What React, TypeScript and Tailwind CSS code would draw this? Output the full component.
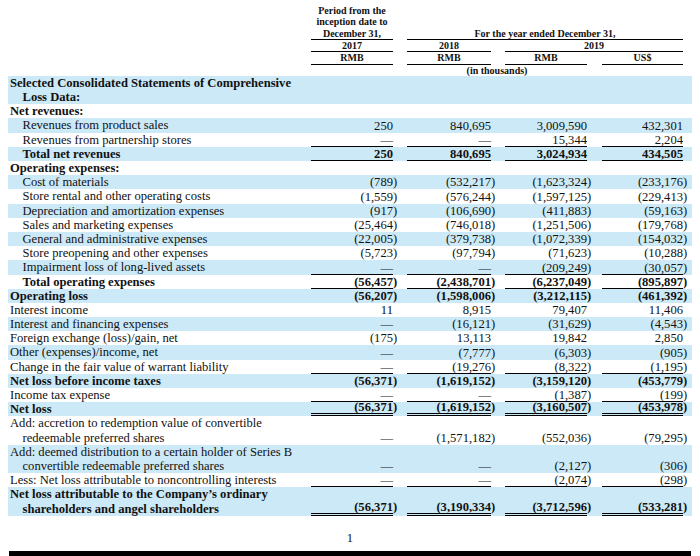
import React from "react";

type Line = "none" | "single" | "double";
type Row = {
  label: string[];
  bold?: boolean;
  indent?: boolean;
  v?: string[];
  line?: Line;
};

const rows: Row[] = [
  { label: ["Selected Consolidated Statements of Comprehensive", "Loss Data:"], bold: true },
  { label: ["Net revenues:"], bold: true },
  { label: ["Revenues from product sales"], indent: true, v: ["250", "840,695", "3,009,590", "432,301"] },
  { label: ["Revenues from partnership stores"], indent: true, v: ["—", "—", "15,344", "2,204"], line: "single" },
  { label: ["Total net revenues"], indent: true, bold: true, v: ["250", "840,695", "3,024,934", "434,505"], line: "single" },
  { label: ["Operating expenses:"], bold: true },
  { label: ["Cost of materials"], indent: true, v: ["(789)", "(532,217)", "(1,623,324)", "(233,176)"] },
  { label: ["Store rental and other operating costs"], indent: true, v: ["(1,559)", "(576,244)", "(1,597,125)", "(229,413)"] },
  { label: ["Depreciation and amortization expenses"], indent: true, v: ["(917)", "(106,690)", "(411,883)", "(59,163)"] },
  { label: ["Sales and marketing expenses"], indent: true, v: ["(25,464)", "(746,018)", "(1,251,506)", "(179,768)"] },
  { label: ["General and administrative expenses"], indent: true, v: ["(22,005)", "(379,738)", "(1,072,339)", "(154,032)"] },
  { label: ["Store preopening and other expenses"], indent: true, v: ["(5,723)", "(97,794)", "(71,623)", "(10,288)"] },
  { label: ["Impairment loss of long-lived assets"], indent: true, v: ["—", "—", "(209,249)", "(30,057)"], line: "single" },
  { label: ["Total operating expenses"], indent: true, bold: true, v: ["(56,457)", "(2,438,701)", "(6,237,049)", "(895,897)"], line: "single" },
  { label: ["Operating loss"], bold: true, v: ["(56,207)", "(1,598,006)", "(3,212,115)", "(461,392)"] },
  { label: ["Interest income"], v: ["11", "8,915", "79,407", "11,406"] },
  { label: ["Interest and financing expenses"], v: ["—", "(16,121)", "(31,629)", "(4,543)"] },
  { label: ["Foreign exchange (loss)/gain, net"], v: ["(175)", "13,113", "19,842", "2,850"] },
  { label: ["Other (expenses)/income, net"], v: ["—", "(7,777)", "(6,303)", "(905)"] },
  { label: ["Change in the fair value of warrant liability"], v: ["—", "(19,276)", "(8,322)", "(1,195)"], line: "single" },
  { label: ["Net loss before income taxes"], bold: true, v: ["(56,371)", "(1,619,152)", "(3,159,120)", "(453,779)"] },
  { label: ["Income tax expense"], v: ["—", "—", "(1,387)", "(199)"], line: "single" },
  { label: ["Net loss"], bold: true, v: ["(56,371)", "(1,619,152)", "(3,160,507)", "(453,978)"], line: "double" },
  { label: ["Add: accretion to redemption value of convertible", "redeemable preferred shares"], v: ["—", "(1,571,182)", "(552,036)", "(79,295)"] },
  { label: ["Add: deemed distribution to a certain holder of Series B", "convertible redeemable preferred shares"], v: ["—", "—", "(2,127)", "(306)"] },
  { label: ["Less: Net loss attributable to noncontrolling interests"], v: ["—", "—", "(2,074)", "(298)"], line: "single" },
  { label: ["Net loss attributable to the Company’s ordinary", "shareholders and angel shareholders"], bold: true, v: ["(56,371)", "(3,190,334)", "(3,712,596)", "(533,281)"], line: "double" },
];

const colW = ["w-[82px]", "w-[84px] ml-[14px]", "w-[82px] ml-[14px]", "w-[81px] ml-[15px]"];

function Num({ value }: { value: string }) {
  if (value.startsWith("(") && value.endsWith(")")) {
    return (
      <span className="block whitespace-nowrap leading-[11px]">
        {value.slice(0, -1)}
        <span className="inline-block w-0">)</span>
      </span>
    );
  }
  return <span className="block whitespace-nowrap leading-[11px]">{value}</span>;
}

export default function App() {
  return (
    <div className="w-[700px] h-[556px] overflow-hidden bg-white text-[#111] font-['Liberation_Serif','Times_New_Roman',serif]">
      <div className="ml-[8px] w-[684px]">
        {/* Header */}
        <div className="text-[10px] font-bold leading-[11.3px] pt-[5px]">
          <div className="flex">
            <div className="w-[303px] shrink-0" />
            <div className="w-[82px] border-b border-black text-center">
              <div>Period from the</div>
              <div>inception date to</div>
              <div>December 31,</div>
            </div>
            <div className="w-[276px] ml-[14px] border-b border-black flex items-end justify-center">
              For the year ended December 31,
            </div>
          </div>
          <div className="flex h-[12.4px]">
            <div className="w-[303px] shrink-0" />
            <div className="w-[82px] border-b border-black text-center">2017</div>
            <div className="w-[84px] ml-[14px] border-b border-black text-center">2018</div>
            <div className="w-[178px] ml-[14px] border-b border-black text-center">2019</div>
          </div>
          <div className="flex h-[12.4px]">
            <div className="w-[303px] shrink-0" />
            <div className="w-[82px] border-b border-black text-center">RMB</div>
            <div className="w-[84px] ml-[14px] border-b border-black text-center">RMB</div>
            <div className="w-[82px] ml-[14px] border-b border-black text-center">RMB</div>
            <div className="w-[81px] ml-[15px] border-b border-black text-center">US$</div>
          </div>
          <div className="flex h-[11.2px]">
            <div className="w-[303px] shrink-0" />
            <div className="w-[372px] text-center">(in thousands)</div>
          </div>
        </div>

        {/* Body */}
        <div className="text-[12.6px] leading-[14.2px]">
          {rows.map((r, i) => {
            const blue = i % 2 === 0;
            const h = r.label.length === 2 ? "h-[28.4px]" : "h-[14.2px]";
            const lineCls =
              r.line === "single"
                ? "border-b border-black"
                : r.line === "double"
                ? "border-b-[3px] border-double border-black"
                : "pb-[1px]";
            return (
              <div key={i} className={`flex ${h} ${blue ? "bg-[#cce9f7]" : ""} ${r.bold ? "font-bold" : ""}`}>
                <div className="w-[303px] shrink-0 whitespace-nowrap">
                  {r.label.map((l, j) => (
                    <div key={j} className={r.indent || j > 0 ? "pl-[14.5px]" : "pl-[2px]"}>
                      {l}
                    </div>
                  ))}
                </div>
                {r.v &&
                  r.v.map((val, k) => (
                    <div key={k} className={`${colW[k]} shrink-0 h-full flex items-end justify-end ${lineCls}`}>
                      <Num value={val} />
                    </div>
                  ))}
              </div>
            );
          })}
        </div>
      </div>

      <div className="mt-[15px] text-center text-[12.6px] leading-[14.2px]">1</div>
      <div className="mt-[6px] ml-[9px] w-[682px] h-[10px] bg-black" />
    </div>
  );
}
